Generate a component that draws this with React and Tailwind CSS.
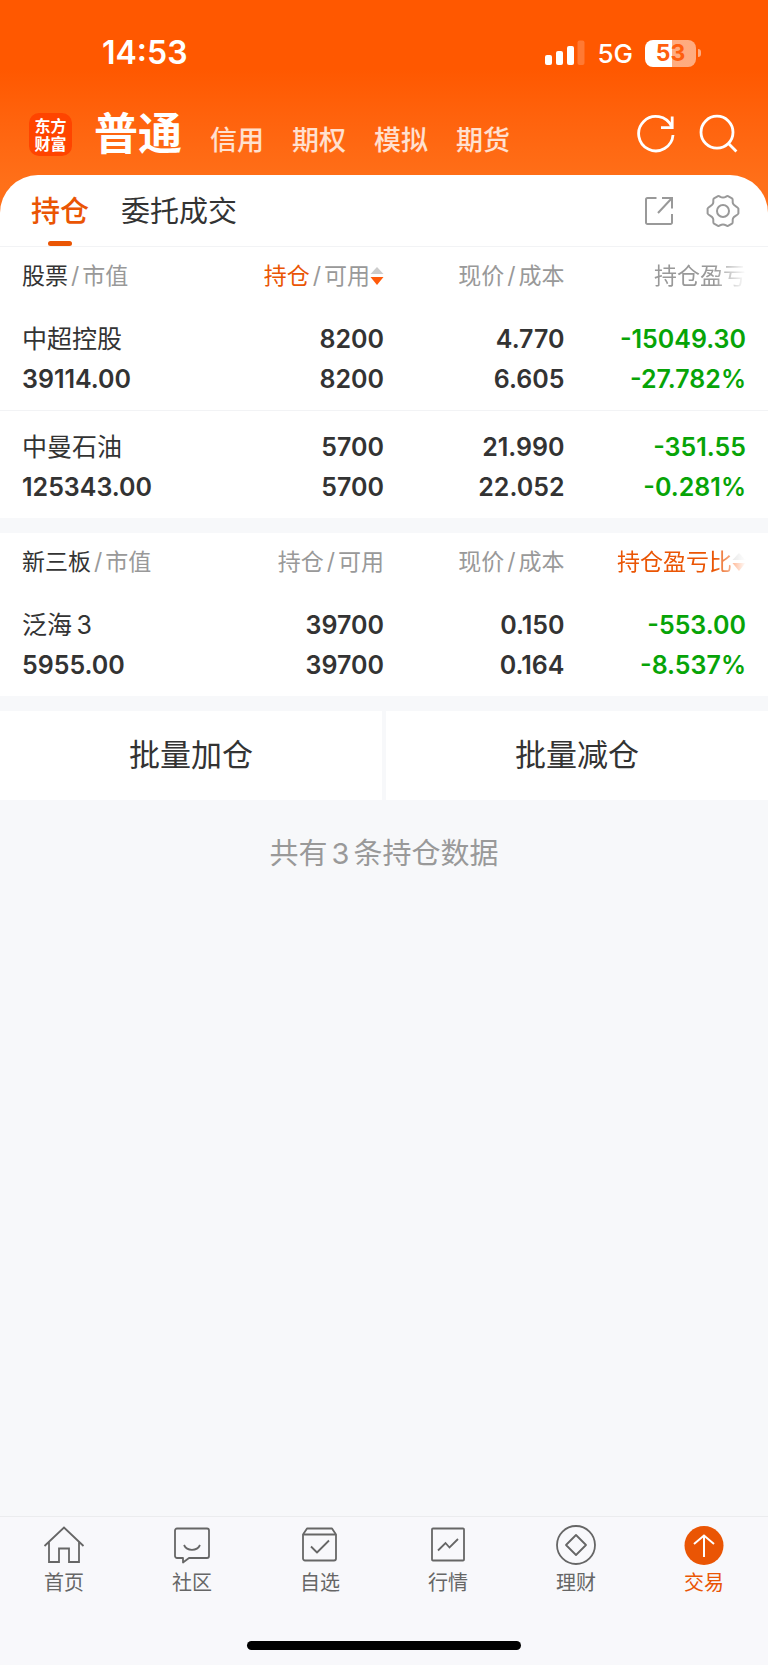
import React, { useState } from 'react';

const accounts = ['普通', '信用', '期权', '模拟', '期货'];

const stockRows = [
  { name: '中超控股', value: '39114.00', held: '8200', usable: '8200', price: '4.770', cost: '6.605', profit: '-15049.30', rate: '-27.782%' },
  { name: '中曼石油', value: '125343.00', held: '5700', usable: '5700', price: '21.990', cost: '22.052', profit: '-351.55', rate: '-0.281%' },
];

const neeqRows = [
  { name: '泛海\u20093', value: '5955.00', held: '39700', usable: '39700', price: '0.150', cost: '0.164', profit: '-553.00', rate: '-8.537%' },
];

const SignalIcon = () => (
  <svg width="40" height="26" viewBox="0 0 40 26" fill="currentColor">
    <rect x="0" y="15" width="7" height="10" rx="2" />
    <rect x="11" y="11" width="7" height="14" rx="2" />
    <rect x="22" y="6" width="7" height="19" rx="2" />
    <rect x="32.5" y="0.5" width="7" height="24.5" rx="2" opacity="0.2" />
  </svg>
);

const RefreshIcon = () => (
  <svg width="40" height="40" viewBox="0 0 40 40" fill="none" stroke="currentColor" strokeWidth="2.8">
    <path d="M38 21A17.2 17.2 0 1 1 36.5 12.5" />
    <path d="M37.2 2.5V13.6H26" />
  </svg>
);

const SearchIcon = () => (
  <svg width="40" height="40" viewBox="0 0 40 40" fill="none" stroke="currentColor" strokeWidth="2.8">
    <circle cx="19" cy="18.2" r="16" />
    <path d="M30 29L38.4 37.6" />
  </svg>
);

const ShareIcon = () => (
  <svg width="30" height="30" viewBox="0 0 30 30" fill="none" stroke="currentColor" strokeWidth="2">
    <path d="M12.5 2H3.5A1.5 1.5 0 0 0 2 3.5V26.5A1.5 1.5 0 0 0 3.5 28H26.5A1.5 1.5 0 0 0 28 26.5V18" />
    <path d="M18 2H28V12.5M28 2L14 17" />
  </svg>
);

const GearIcon = () => (
  <svg width="34" height="34" viewBox="0 0 34 34" fill="none" stroke="currentColor" strokeWidth="2" strokeLinejoin="round">
    <path d="M12 2.2C13.6 1.5 14 3.6 17 3.6S20.4 1.5 22 2.2L26 4.4C27.6 5.5 26 7.2 27 9.6S31.6 12.5 32.4 14.5V19.5C31.6 21.5 28 22 27 24.4S27.6 28.5 26 29.6L22 31.8C20.4 32.5 20 30.4 17 30.4S13.6 32.5 12 31.8L8 29.6C6.400 28.500 8 26.800 7 24.400S2.400 21.500 1.600 19.500V14.500C2.400 12.500 6 12 7 9.600S6.400 5.500 8 4.400Z" />
    <circle cx="17" cy="17" r="6" />
  </svg>
);

const HomeIcon = () => (
  <svg width="42" height="42" viewBox="0 0 42 42" fill="none" stroke="currentColor" strokeWidth="1.8">
    <path d="M1.5 22L21 3.5L40.5 22M6 18V38H16V24.5H26V38H36V18" />
  </svg>
);

const CommunityIcon = () => (
  <svg width="42" height="42" viewBox="0 0 42 42" fill="none" stroke="currentColor" strokeWidth="1.8" strokeLinejoin="round">
    <path d="M6 4.500H36A2 2 0 0 1 38 6.500V32A2 2 0 0 1 36 34H18L12 38.500V34H6A2 2 0 0 1 4 32V6.500A2 2 0 0 1 6 4.500Z" />
    <path d="M13 21C16 27.500 26 27.500 29 21" />
  </svg>
);

const WatchlistIcon = () => (
  <svg width="42" height="42" viewBox="0 0 42 42" fill="none" stroke="currentColor" strokeWidth="1.8" strokeLinejoin="round">
    <path d="M4 10.500L8 4.500H33L37 10.500V34.500A2 2 0 0 1 35 36.500H6A2 2 0 0 1 4 34.500Z" />
    <path d="M4.500 10.500H36.500M12 22.500L18 28.500L30 16.500" />
  </svg>
);

const MarketIcon = () => (
  <svg width="42" height="42" viewBox="0 0 42 42" fill="none" stroke="currentColor" strokeWidth="1.8">
    <rect x="5" y="4.5" width="32" height="32" rx="1" />
    <path d="M11 26.5L18.500 19L22.500 23.500L31 15" />
  </svg>
);

const WealthIcon = () => (
  <svg width="42" height="42" viewBox="0 0 42 42" fill="none" stroke="currentColor" strokeWidth="1.8" strokeLinejoin="round">
    <circle cx="21" cy="21" r="19" />
    <path d="M21 11L31 21L21 31L11 21Z" />
  </svg>
);

const TradeIcon = () => (
  <svg width="42" height="42" viewBox="0 0 42 42" fill="none">
    <circle cx="21" cy="21.5" r="19.5" fill="#ea5504" />
    <path d="M21 11.5V33M11 20L21 11.5L31 20" stroke="#fff" strokeWidth="2" />
  </svg>
);

const SortIcon = () => (
  <svg width="14" height="20" viewBox="0 0 14 20" className="shrink-0">
    <path d="M7 1L13.5 8H0.5Z" fill="#ccc" />
    <path d="M7 19L13.5 11H0.5Z" fill="#ff5a0a" />
  </svg>
);

const navItems = [
  { label: '首页', Icon: HomeIcon },
  { label: '社区', Icon: CommunityIcon },
  { label: '自选', Icon: WatchlistIcon },
  { label: '行情', Icon: MarketIcon },
  { label: '理财', Icon: WealthIcon },
  { label: '交易', Icon: TradeIcon },
];

const Slash = () => <span className="mx-[3px]">/</span>;

const HoldingsTable = ({ title, rows, sortBy, profitLabel }) => {
  const heldSorted = sortBy === 'held';
  const profitSorted = sortBy === 'profit';

  return (
    <table className="w-full table-fixed bg-white text-right text-[#333]">
      <thead>
        <tr className="h-14 text-[23px] text-[#999]">
          <th scope="col" className="w-1/4 pt-0.5 pl-[22px] text-left font-normal whitespace-nowrap">
            <span className="text-[#333]">{title}</span><Slash />市值
          </th>
          <th scope="col" className="w-1/4 pt-0.5 font-normal">
            <button type="button" className="flex w-full items-center justify-end whitespace-nowrap">
              <span className={heldSorted ? 'text-[#ea5504]' : ''}>持仓</span><Slash />可用
              {heldSorted && <SortIcon />}
            </button>
          </th>
          <th scope="col" className="w-[23.5%] pt-0.5 font-normal whitespace-nowrap">现价<Slash />成本</th>
          <th scope="col" className="pt-0.5 pr-[22px] font-normal">
            <button
              type="button"
              className="flex w-full items-center justify-end whitespace-nowrap [mask-image:linear-gradient(to_left,transparent,black_32px)]"
            >
              <span className={profitSorted ? 'text-[#ea5504]' : ''}>{profitLabel}</span>
              {profitSorted && <SortIcon />}
            </button>
          </th>
        </tr>
      </thead>
      <tbody className="text-[25px] leading-10 font-semibold">
        {rows.map((row, index) => (
          <tr key={row.name} className={index > 0 ? 'border-t border-[#f2f3f5]' : ''}>
            <td className="pt-4 pb-[11px] pl-[22px] text-left whitespace-nowrap">
              <div className="font-normal">{row.name}</div>
              <div>{row.value}</div>
            </td>
            <td className="pt-4 pb-[11px]">
              <div>{row.held}</div>
              <div>{row.usable}</div>
            </td>
            <td className="pt-4 pb-[11px]">
              <div>{row.price}</div>
              <div>{row.cost}</div>
            </td>
            <td className="pt-4 pr-[22px] pb-[11px] text-[#07a407]">
              <div>{row.profit}</div>
              <div>{row.rate}</div>
            </td>
          </tr>
        ))}
      </tbody>
    </table>
  );
};

const App = () => {
  const [account, setAccount] = useState('普通');
  const [tab, setTab] = useState('持仓');

  return (
    <div className="flex min-h-screen flex-col bg-[#f7f8fa] font-['Inter','Noto_Sans_CJK_SC',sans-serif]">
      <header className="bg-linear-to-b from-[#ff5800] from-28% to-[#ff7019] to-75%">
        {/* Status bar */}
        <div className="flex h-[104px] items-center justify-between pt-0.5 pr-[67px] pl-[102px] text-white">
          <span className="text-[32px] font-semibold">14:53</span>
          <div className="flex items-center gap-3">
            <SignalIcon />
            <span className="text-[26px] font-medium">5G</span>
            <div className="flex items-center gap-0.5">
              <span className="flex h-[27px] w-[51px] items-center justify-center rounded-lg bg-linear-to-r from-white from-53% to-white/50 to-53% text-[23px] font-bold text-[#ff5f0f]">
                53
              </span>
              <span className="h-2 w-[3px] rounded-r-full bg-white/50" />
            </div>
          </div>
        </div>

        {/* Account switcher */}
        <div className="flex h-[71px] items-start justify-between pr-[30px] pl-[29px] text-white">
          <div className="flex">
            <span className="mt-[9px] flex size-[43px] flex-col items-center justify-center rounded-[10px] bg-[#ff4400] text-base leading-[18px] font-bold">
              <span>东方</span>
              <span>财富</span>
            </span>
            <nav className="ml-[22px] flex items-baseline gap-7">
              {accounts.map(item => (
                <button
                  key={item}
                  type="button"
                  onClick={() => setAccount(item)}
                  className={item === account ? 'text-[44px] leading-[60px] font-bold' : 'text-[27px] leading-[60px] font-medium text-white/80'}
                >
                  {item}
                </button>
              ))}
            </nav>
          </div>
          <div className="mt-2.5 flex gap-[23px]">
            <button type="button" aria-label="刷新"><RefreshIcon /></button>
            <button type="button" aria-label="搜索"><SearchIcon /></button>
          </div>
        </div>

        <div className="flex h-[72px] items-stretch justify-between rounded-t-[38px] border-b border-[#f2f3f5] bg-white pr-7 pl-[31px]">
          <div className="flex gap-8">
            {['持仓', '委托成交'].map(item => (
              <button
                key={item}
                type="button"
                onClick={() => setTab(item)}
                className={item === tab ? 'relative pt-0.5 text-[29px] font-medium text-[#ea5504]' : 'relative pt-0.5 text-[29px] text-[#333]'}
              >
                {item}
                {item === tab && <span className="absolute bottom-0 left-1/2 h-[5px] w-6 -translate-x-1/2 rounded-sm bg-[#ea5504]" />}
              </button>
            ))}
          </div>
          <div className="flex items-center gap-8 text-[#999]">
            <button type="button" aria-label="分享"><ShareIcon /></button>
            <button type="button" aria-label="设置"><GearIcon /></button>
          </div>
        </div>
      </header>

      <main className="flex-1">
        <HoldingsTable title="股票" rows={stockRows} sortBy="held" profitLabel="持仓盈亏" />
        <div className="mt-[15px]">
          <HoldingsTable title="新三板" rows={neeqRows} sortBy="profit" profitLabel="持仓盈亏比" />
        </div>
        <div className="mt-[15px] grid grid-cols-2 gap-1 text-[31px] text-[#333]">
          <button type="button" className="h-[89px] bg-white">批量加仓</button>
          <button type="button" className="h-[89px] bg-white">批量减仓</button>
        </div>
        <p className="mt-8 text-center text-[29px] text-[#999]">
          共有<span className="mx-1">3</span>条持仓数据
        </p>
      </main>

      <footer className="border-t border-[#ebecee] bg-[#f8f8fb]">
        <nav className="grid grid-cols-6 pt-[7px]">
          {navItems.map(({ label, Icon }) => (
            <a
              key={label}
              href="#"
              className={label === '交易' ? 'flex flex-col items-center text-[#ea5504]' : 'flex flex-col items-center text-[#666]'}
            >
              <Icon />
              <span className="mt-[3px] text-xl leading-7">{label}</span>
            </a>
          ))}
        </nav>
        <div className="mx-auto mt-11 mb-[15px] h-[9px] w-[274px] rounded-full bg-black" />
      </footer>
    </div>
  );
};

export default App;
